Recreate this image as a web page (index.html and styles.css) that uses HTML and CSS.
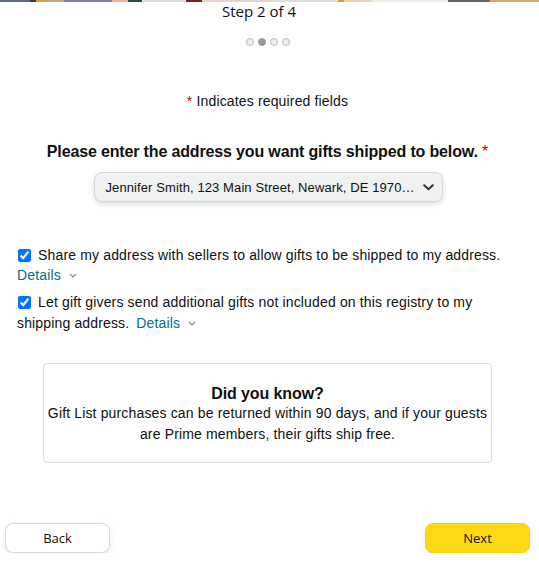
FILE: index.html
```html
<!DOCTYPE html>
<html lang="en">
<head>
<meta charset="utf-8">
<title>Step 2 of 4</title>
<link rel="stylesheet" href="styles.css">
</head>
<body>
<div class="strip"></div>
<main class="page">
  <div class="step">Step 2 of 4</div>
  <div class="dots">
    <span class="dot"></span><span class="dot active"></span><span class="dot"></span><span class="dot"></span>
  </div>
  <p class="required"><span class="star">*</span> Indicates required fields</p>
  <h2 class="heading">Please enter the address you want gifts shipped to below. <span class="star">*</span></h2>
  <div class="select-wrap">
    <button class="select" type="button">
      <span class="select-text">Jennifer Smith, 123 Main Street, Newark, DE 1970…</span>
      <svg class="select-chev" width="11" height="7" viewBox="0 0 11 7"><path d="M1.2 1.2 L5.5 5.3 L9.8 1.2" fill="none" stroke="#333" stroke-width="2" stroke-linecap="round" stroke-linejoin="round"/></svg>
    </button>
  </div>
  <div class="options">
    <div class="option">
      <label class="opt-label"><input type="checkbox" checked> Share my address with sellers to allow gifts to be shipped to my address.</label>
      <a class="details" href="#">Details <svg class="det-chev" width="8" height="5" viewBox="0 0 8 5"><path d="M1 1 L4 4 L7 1" fill="none" stroke="#888" stroke-width="1.1"/></svg></a>
    </div>
    <div class="option second">
      <label><input type="checkbox" checked> <span>Let gift givers send additional gifts not included on this registry to my</span> <span>shipping address.</span></label>
      <a class="details gap" href="#">Details <svg class="det-chev" width="8" height="5" viewBox="0 0 8 5"><path d="M1 1 L4 4 L7 1" fill="none" stroke="#888" stroke-width="1.1"/></svg></a>
    </div>
  </div>
  <section class="card">
    <h3 class="card-title">Did you know?</h3>
    <p class="card-text">Gift List purchases can be returned within 90 days, and if your guests are Prime members, their gifts ship free.</p>
  </section>
  <footer class="actions">
    <button class="btn back" type="button">Back</button>
    <button class="btn next" type="button">Next</button>
  </footer>
</main>
</body>
</html>
```
FILE: styles.css
```css
* { box-sizing: border-box; }
html, body { margin: 0; padding: 0; background: #fff; }
body {
  font-family: "Liberation Sans", Arial, sans-serif;
  color: #0f1111;
  font-size: 14px;
  letter-spacing: 0.15px;
}
.strip {
  height: 2px;
  background: linear-gradient(90deg,
    #5c6a7e 0, #5c6a7e 30px, #3a3a3a 30px, #3a3a3a 36px, #d39a5a 36px, #d39a5a 46px,
    #c9a47a 46px, #c9a47a 64px, #7c8696 64px, #7c8696 112px, #eab595 112px, #eab595 128px,
    #2d4a3b 128px, #2d4a3b 142px, #dddddd 142px, #dddddd 186px, #6d2424 186px, #6d2424 202px,
    #e9d2cf 202px, #e9d2cf 268px, #dedede 268px, #dedede 338px, #e19a4a 338px, #e19a4a 344px,
    #e7d4b8 344px, #e7d4b8 372px, #f0ede8 372px, #f0ede8 448px, #6a6462 448px, #6a6462 490px,
    #d8a865 490px, #d8a865 539px);
}
.page {
  padding: 0 9px 0 5px;
}
.step {
  font-family: "Open Sans", "Noto Sans", sans-serif;
  font-size: 15px;
  line-height: 18px;
  letter-spacing: 0;
  text-align: center;
  color: #0f1111;
  padding-right: 17px;
}
.dots {
  display: flex;
  justify-content: center;
  gap: 4px;
  margin-top: 18px;
  height: 8px;
}
.dot {
  width: 8px;
  height: 8px;
  border-radius: 50%;
  background: #eeeeee;
  border: 1px solid #b9b9b9;
}
.dot.active { background: #9a9a9a; border-color: #9a9a9a; }
.required {
  margin: 45px 0 0;
  text-align: center;
  line-height: 20px;
  font-size: 14px;
}
.star { color: #c40000; }
.heading {
  margin: 30px 0 0;
  font-size: 16px;
  line-height: 22px;
  font-weight: 700;
  letter-spacing: -0.15px;
  text-align: center;
}
.heading .star { font-weight: 400; }
.select-wrap {
  display: flex;
  justify-content: center;
  margin-top: 9px;
}
.select {
  width: 349px;
  height: 30px;
  margin-left: 1px;
  display: flex;
  align-items: center;
  justify-content: space-between;
  padding: 0 8px 0 11px;
  background: #f0f2f2;
  border: 1px solid #d5d9d9;
  border-radius: 8px;
  box-shadow: 0 2px 5px rgba(15, 17, 17, 0.15);
  font-family: "Liberation Sans", Arial, sans-serif;
  font-size: 13px;
  letter-spacing: 0.1px;
  color: #0f1111;
}
.options {
  margin-top: 43px;
  padding: 0 20px 0 12px;
}
.option { line-height: 20px; }
.option.second { margin-top: 7px; line-height: 21px; }
.option input {
  margin: 0 3px 0 1px;
  width: 13px;
  height: 13px;
  vertical-align: -2px;
  accent-color: #0075ff;
}
.opt-label { display: block; }
.details {
  color: #007185;
  text-decoration: none;
}
.details.gap { margin-left: 3px; }
.det-chev { margin-left: 4px; vertical-align: 2px; }
.card {
  margin: 29px 38px 0 38px;
  height: 100px;
  border: 1px solid #dddddd;
  border-radius: 4px;
  padding: 21px 1px 0;
  text-align: center;
}
.card-title {
  margin: 0;
  font-size: 16px;
  line-height: 18px;
  font-weight: 700;
  letter-spacing: -0.1px;
}
.card-text {
  margin: 0;
  line-height: 21px;
  font-size: 14px;
}
.actions {
  display: flex;
  justify-content: space-between;
  margin-top: 60px;
}
.btn {
  width: 105px;
  height: 30px;
  border-radius: 8px;
  font-family: "Open Sans", "Noto Sans", sans-serif;
  font-size: 13px;
  letter-spacing: 0;
  color: #0f1111;
  padding: 0;
}
.back {
  background: #fff;
  border: 1px solid #d5d9d9;
  box-shadow: 0 2px 5px rgba(213, 217, 217, 0.5);
}
.next {
  background: #ffd814;
  border: 1px solid #fcd200;
  box-shadow: 0 2px 5px rgba(213, 217, 217, 0.5);
}
```
